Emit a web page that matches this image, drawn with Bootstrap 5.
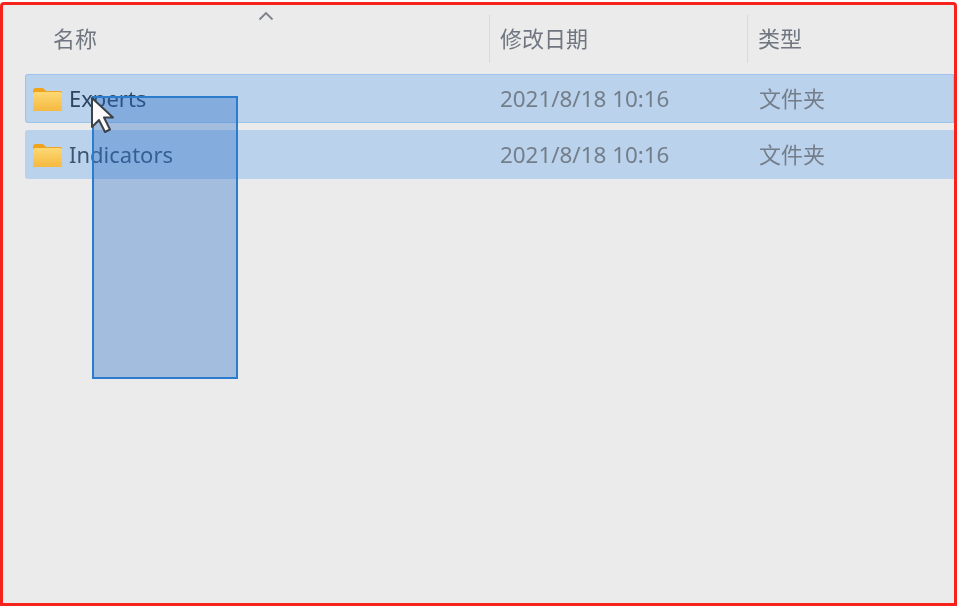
<!DOCTYPE html>
<html lang="zh-CN">
<head>
    <meta charset="UTF-8">
    <title>文件夹</title>
    <link href="https://cdn.jsdelivr.net/npm/bootstrap@5.3.0/dist/css/bootstrap.min.css" rel="stylesheet">
    <style>
        html, body { height: 100%; background: #fff; overflow: hidden; }
        body { padding-top: 2px; font-family: "Noto Sans", "Noto Sans CJK SC", sans-serif; }
        .shot { height: 604px; background: #ebebeb; border: 3px solid #f5231c; border-radius: 4px 4px 0 0; position: relative; overflow: hidden; }
        .head-row { height: 69px; padding-top: 10px; color: #6f7680; font-size: 22px; font-family: "Noto Sans CJK SC", sans-serif; }
        .name-col { width: 486px; flex: none; }
        .date-col { width: 258px; flex: none; }
        .head-row > div { height: 48px; line-height: 44px; position: relative; filter: blur(.5px); }
        .head-row .date-col, .head-row .type-col { border-left: 1px solid #dadada; }
        .head-row .name-col { padding-left: 50px; }
        .head-row .date-col { padding-left: 10px; }
        .head-row .type-col { padding-left: 10px; }
        .sort-mark { position: absolute; left: 255px; top: -4px; }
        .file-row { height: 49px; margin-left: 22px; margin-bottom: 7px; background: #bad2eb; border-radius: 3px 0 0 3px; color: #747e8a; font-size: 22.4px; filter: blur(.5px); }
        .file-row.current { outline: 1px solid #9cc3ea; outline-offset: -1px; }
        .file-row .name-col { width: 475px; padding-left: 7px; gap: 8px; }
        .file-row .date-col { width: 259px; }
        .file-row .type-col { font-family: "Noto Sans CJK SC", sans-serif; font-size: 22px; margin-top: -2px; }
        .file-label { color: #3b5674; font-size: 22px; margin-left: -1px; }
        .current .file-label { color: #2c4563; }
        .drag-box { position: absolute; left: 89px; top: 91px; width: 146px; height: 283px; background: rgba(40, 110, 200, .37); border: 2px solid #2b7ccd; filter: blur(.3px); }
        .pointer { position: absolute; left: 86px; top: 90px; }
    </style>
</head>
<body>
    <div class="shot">
        <div class="head-row d-flex">
            <div class="name-col">名称
                <svg class="sort-mark" width="16" height="10" viewBox="0 0 16 10"><path d="M1.5 8.5 8 2l6.5 6.5" fill="none" stroke="#7d8288" stroke-width="1.8"/></svg>
            </div>
            <div class="date-col">修改日期</div>
            <div class="type-col">类型</div>
        </div>

        <div class="file-row current d-flex align-items-center">
            <div class="name-col d-flex align-items-center">
                <svg width="30" height="24" viewBox="0 0 30 24"><defs><linearGradient id="folderFill" x1="0" y1="0" x2="0" y2="1"><stop offset="0" stop-color="#fcd873"/><stop offset="1" stop-color="#f5b940"/></linearGradient></defs><path d="M1 4a3 3 0 0 1 3-3h6a3 3 0 0 1 2 1l2 2h14a2 2 0 0 1 2 2v3H1z" fill="#f0a41c"/><rect x="1" y="5" width="29" height="19" rx="2" fill="url(#folderFill)"/></svg>
                <span class="file-label">Experts</span>
            </div>
            <div class="date-col">2021/8/18 10:16</div>
            <div class="type-col">文件夹</div>
        </div>

        <div class="file-row d-flex align-items-center">
            <div class="name-col d-flex align-items-center">
                <svg width="30" height="24" viewBox="0 0 30 24"><path d="M1 4a3 3 0 0 1 3-3h6a3 3 0 0 1 2 1l2 2h14a2 2 0 0 1 2 2v3H1z" fill="#f0a41c"/><rect x="1" y="5" width="29" height="19" rx="2" fill="url(#folderFill)"/></svg>
                <span class="file-label">Indicators</span>
            </div>
            <div class="date-col">2021/8/18 10:16</div>
            <div class="type-col">文件夹</div>
        </div>

        <div class="drag-box"></div>
        <svg class="pointer" width="28" height="42" viewBox="0 0 28 42"><path d="M3 3v29l7-7 6 12 5-2.500-6-12h9z" fill="#fbfbfb" stroke="#3d4249" stroke-width="2" stroke-linejoin="round"/></svg>
    </div>
</body>
</html>
